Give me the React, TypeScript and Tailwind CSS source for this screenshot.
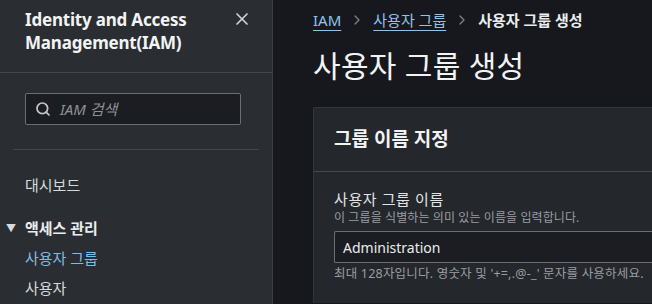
import { Search, X, ChevronRight } from 'lucide-react';

const font = { fontFamily: '"Noto Sans", "Noto Sans CJK KR", sans-serif' };

function Sidebar() {
  return (
    <aside className="w-[273px] shrink-0 bg-[#2a2d32] border-r border-[#3a3d42] h-full flex flex-col">
      {/* Header */}
      <div className="h-[73px] border-b border-[#43464b] flex items-start justify-between pl-[25px] pr-[20px] pt-[8px]">
        <h2 className="text-[17px] leading-[23px] font-bold text-[#f2f3f3] tracking-[-0.2px]">
          Identity and Access
          <br />
          Management(IAM)
        </h2>
        <X className="h-[20px] w-[20px] text-[#d1d5db] mt-[1px]" strokeWidth={2} />
      </div>

      {/* Search */}
      <div className="mx-[13px] pt-[20px] pb-[24px] border-b border-[#43464b]">
        <div className="ml-[12px] mr-[18px] h-[32px] flex items-center gap-[9px] px-[9px] bg-[#1b1d22] border border-[#6b6e73] rounded-[2px]">
          <Search className="h-[16px] w-[16px] text-[#c4c7cb]" strokeWidth={2.6} />
          <span className="text-[15px] italic text-[#8d9096]">IAM 검색</span>
        </div>
      </div>

      {/* Nav */}
      <nav className="pt-[24px] text-[15px]">
        <div className="pl-[25px] h-[22px] leading-[22px] text-[#d5dbdb]">대시보드</div>
        <div className="mt-[21px] flex items-center h-[22px]">
          <span className="w-[25px] pl-[6px] text-[10px] text-[#d5dbdb]">▼</span>
          <span className="font-bold text-[#eaeded]">액세스 관리</span>
        </div>
        <div className="pl-[25px] mt-[8px] h-[22px] leading-[22px] text-[#7cbde8]">사용자 그룹</div>
        <div className="pl-[25px] mt-[8px] h-[22px] leading-[22px] text-[#d5dbdb]">사용자</div>
      </nav>
    </aside>
  );
}

function Breadcrumbs() {
  return (
    <div className="flex items-center gap-[8px] text-[15px] h-[22px]">
      <span className="text-[#8fc3ec] underline underline-offset-[4px] decoration-[#8fc3ec]">IAM</span>
      <ChevronRight className="h-[16px] w-[16px] text-[#7d8085]" />
      <span className="text-[#8fc3ec] underline underline-offset-[4px] decoration-[#8fc3ec]">사용자 그룹</span>
      <ChevronRight className="h-[16px] w-[16px] text-[#7d8085]" />
      <span className="font-bold text-[#eaeded]">사용자 그룹 생성</span>
    </div>
  );
}

export default function App() {
  return (
    <div style={font} className="w-[652px] h-[304px] flex bg-[#16181d] overflow-hidden">
      <Sidebar />
      <main className="flex-1 pl-[40px] pt-[9px] min-w-0">
        <Breadcrumbs />
        <h1 className="mt-[16px] text-[30px] leading-[38px] text-[#f2f3f3] font-normal tracking-[0.3px]">사용자 그룹 생성</h1>

        <section className="mt-[22px] bg-[#24272c] border-t border-l border-[#33363b] rounded-tl-[2px] w-[360px] h-[196px]">
          <div className="h-[64px] border-b border-[#45484d] pl-[20px] flex items-center">
            <h3 className="text-[19px] font-bold text-[#f2f3f3]">그룹 이름 지정</h3>
          </div>
          <div className="pl-[20px] pt-[16px]">
            <div className="text-[15px] leading-[22px] text-[#e2e4e6] tracking-[0.6px]">사용자 그룹 이름</div>
            <div className="text-[12px] leading-[16px] text-[#9a9da3] tracking-[0.1px]">이 그룹을 식별하는 의미 있는 이름을 입력합니다.</div>
            <div className="mt-[5px] h-[32px] bg-[#1b1d22] border border-[#6b6e73] rounded-l-[2px] border-r-0 flex items-center pl-[8px]">
              <span className="text-[14px] text-[#eaeded]">Administration</span>
            </div>
            <div className="mt-[3px] text-[12.5px] leading-[16px] text-[#9a9da3] whitespace-nowrap tracking-[0.2px]">
              최대 128자입니다. 영숫자 및 '+=,.@-_' 문자를 사용하세요.
            </div>
          </div>
        </section>
      </main>
    </div>
  );
}
